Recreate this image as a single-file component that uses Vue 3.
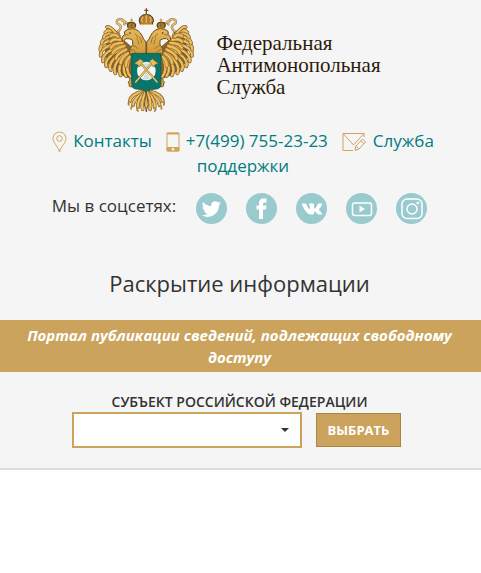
<script setup>
import { ref } from 'vue'

const region = ref('')

const wingFeathers = [
  'M118 176 Q104 214 122 230',
  'M114 172 Q92 206 108 228',
  'M110 166 Q78 200 92 226',
  'M106 160 Q64 194 76 220',
  'M102 153 Q50 186 62 210',
  'M98 145 Q40 174 49 199',
  'M95 136 Q34 158 39 184',
  'M92 127 Q28 140 32 167',
  'M89 118 Q30 122 31 149',
  'M87 109 Q38 106 35 130',
  'M85 102 Q50 92 41 112',
  'M80 100 Q56 84 46 97',
  'M78 100 Q58 76 51 81'
]
const wingCoverts = [
  'M120 170 Q106 184 108 198',
  'M114 160 Q92 174 92 190',
  'M108 149 Q80 160 78 176',
  'M103 138 Q72 146 68 160',
  'M97 128 Q68 130 63 143',
  'M91 119 Q70 114 62 125',
  'M84 110 Q72 100 62 108'
]
const tailFeathers = [
  'M160 274 Q122 282 119 304',
  'M162 276 Q130 296 129 316',
  'M164 276 Q140 304 144 322',
  'M167 276 Q152 306 158 328'
]
</script>

<template>
  <div class="page">
    <header class="top">
      <a href="#" class="brand">
        <svg class="emblem" viewBox="0 0 330 360" aria-hidden="true">
          <defs>
            <linearGradient id="gold" x1="0" y1="0" x2="0" y2="1">
              <stop offset="0" stop-color="#e6b85a" />
              <stop offset="1" stop-color="#cf9838" />
            </linearGradient>
            <g id="half" stroke-linecap="round" stroke-linejoin="round">
              <path d="M80 104 Q104 120 120 136 L145 170 L120 236 Q80 224 52 190 Q34 150 60 104Z" fill="#8a642a" />
              <template v-for="d in wingFeathers" :key="d">
                <path :d="d" fill="none" stroke="#694b22" stroke-width="11" />
                <path :d="d" fill="none" stroke="#e2b04f" stroke-width="8" />
                <path :d="d" fill="none" stroke="#f3d382" stroke-width="2" />
              </template>
              <template v-for="d in wingCoverts" :key="d">
                <path :d="d" fill="none" stroke="#86602a" stroke-width="12" />
                <path :d="d" fill="none" stroke="#dfac49" stroke-width="9" />
                <path :d="d" fill="none" stroke="#f5d98e" stroke-width="2" />
              </template>
              <template v-for="d in tailFeathers" :key="d">
                <path :d="d" fill="none" stroke="#6f5025" stroke-width="11" />
                <path :d="d" fill="none" stroke="#dfae4e" stroke-width="8" />
                <path :d="d" fill="none" stroke="#f5d98e" stroke-width="2" />
              </template>
              <path d="M119 306 q-7 4 -2 9 M129 318 q-8 2 -5 9 M144 324 q-6 5 0 9" fill="none" stroke="#b68132" stroke-width="5" />
              <path d="M130 236 Q117 232 119 242 Q110 246 118 252 Q114 262 126 260 L140 266 L142 238Z" fill="#dba642" stroke="#76531f" stroke-width="3" />
              <path d="M118 71 Q107 70 101 62 Q94 54 82 60 Q78 68 84 72 Q94 75 92 84 Q90 91 84 94 M98 62 Q106 64 103 73" fill="none" stroke="#94733a" stroke-width="7" />
              <path d="M118 71 Q107 70 101 62 Q94 54 82 60 Q78 68 84 72 Q94 75 92 84 Q90 91 84 94 M98 62 Q106 64 103 73" fill="none" stroke="#e3c078" stroke-width="4" />
              <path d="M104 94 Q112 85 128 86 Q148 89 156 107 Q160 118 168 126 L168 170 L124 170 Q116 158 120 146 Q132 134 128 121 Q120 114 108 116 L99 125 Q91 112 103 104Z" fill="url(#gold)" stroke="#694b22" stroke-width="3" />
              <path d="M104 105 L115 104 M135 101 q7 4 8 12 M141 117 q6 6 5 15 M130 137 q9 1 13 9 M148 111 q7 8 7 18 M125 148 q8 1 13 10" fill="none" stroke="#7f5922" stroke-width="2" />
              <circle cx="120" cy="99" r="2.500" fill="#3b2a15" />
              <path d="M114 83 Q109 74 115 69 Q124 63 134 69 Q140 74 135 83Z" fill="#94691f" stroke="#4c3517" stroke-width="3" />
              <path d="M114 84 L136 84 M120 72 Q116 77 120 80 M130 72 Q134 77 130 80 M125 57 v9 M122 60 h6" fill="none" stroke="#c4913c" stroke-width="3" />
            </g>
            <g id="hammer" stroke-linecap="round" stroke-linejoin="round">
              <path d="M137 246 L186 190" stroke="#765b20" stroke-width="6" />
              <path d="M137 246 L186 190" stroke="#f1cb65" stroke-width="4" />
              <path d="M178 183 L188 177 L195 183 L205 190 L195 194 L190 201 L184 192Z" fill="#e7bd59" stroke="#80601e" stroke-width="2" />
            </g>
          </defs>
          <use href="#half" />
          <use href="#half" transform="translate(338 0) scale(-1 1)" />
          <path d="M169 274 L163 315 Q169 327 169 336 Q169 327 175 315Z" fill="#e3b557" stroke="#6f5025" stroke-width="3" />
          <path d="M151 73 Q144 59 151 51 Q158 42 169 44 Q180 42 187 51 Q194 59 187 73Z" fill="#b17c2c" stroke="#513817" stroke-width="3" />
          <path d="M158 67 Q151 56 160 51 M180 67 Q187 56 178 51 M169 46 V69 M152 73 H186" fill="none" stroke="#e3b85e" stroke-width="4" />
          <path d="M169 25 V42 M163 31 H175" stroke="#765322" stroke-width="4" />
          <path d="M125 160 H213 V252 Q213 265 200 267 L181 269 Q173 270 169 276 Q165 270 157 269 L138 267 Q125 265 125 252Z" fill="#08766c" stroke="#174d40" stroke-width="2" />
          <circle cx="169" cy="213" r="28" fill="#f4f5f3" />
          <path d="M169 213 L158 193 Q169 187 180 193Z M169 213 L158 236 Q169 241 180 236Z" fill="#d5dddb" />
          <use href="#hammer" />
          <use href="#hammer" transform="translate(338 0) scale(-1 1)" />
        </svg>
        <span class="brand-name">Федеральная<br />Антимонопольная<br />Служба</span>
      </a>

      <nav class="contacts">
        <a href="#"><svg class="pin" viewBox="0 0 15 22" aria-hidden="true"><path d="M7.500 21 C6 15 1 12 1 7.500 A6.500 6.500 0 0 1 14 7.500 C14 12 9 15 7.500 21Z" /><circle cx="7.500" cy="7.500" r="2.800" /></svg>Контакты</a>
        <a href="tel:+74997552323"><svg class="phone" viewBox="0 0 14 20" aria-hidden="true"><rect x="1" y="1" width="12" height="18" rx="1.500" /><path class="solid" d="M1 15.500 H13 V19 H1Z M1 1 H13 V2 H1Z" /><circle class="key" cx="7" cy="17.300" r="1.300" /></svg>+7(499) 755-23-23</a>
        <a href="#"><svg class="mail" viewBox="0 0 25 20" aria-hidden="true"><path d="M11 18.500 H1 V1.500 H22 V5 M1 1.500 L11.500 13 L22 1.500 M14 14 L20.500 7 L23.500 10 L17 17 L13 18.500Z M14 14 L17 17 M19 9 L22 12" /></svg><span>Служба</span> <span>поддержки</span></a>
      </nav>

      <div class="social">
        <span class="social-label">Мы в соцсетях:</span>
        <div class="social-links">
          <a href="#" aria-label="Twitter">
            <svg viewBox="0 0 31 31"><path d="M25 10.200 a8 8 0 0 1-2.200.6 a4 4 0 0 0 1.700-2.200 a8 8 0 0 1-2.500 1 a3.900 3.900 0 0 0-6.700 3.600 A11 11 0 0 1 7.200 9 a3.900 3.900 0 0 0 1.200 5.300 a4 4 0 0 1-1.800-.5 a3.900 3.900 0 0 0 3.200 3.900 a4 4 0 0 1-1.800.1 a3.900 3.900 0 0 0 3.700 2.700 a8 8 0 0 1-5.700 1.700 a11.200 11.200 0 0 0 17-9.900 a8 8 0 0 0 2-2.100Z" /></svg>
          </a>
          <a href="#" aria-label="Facebook">
            <svg viewBox="0 0 31 31"><path d="M13 26 V16.500 H10.500 V12.500 H13 V10 Q13 5.500 17.500 5.500 H20.500 V9.500 H18.500 Q17 9.500 17 11 V12.500 H20.500 L20 16.500 H17 V26Z" /></svg>
          </a>
          <a href="#" aria-label="ВКонтакте">
            <svg viewBox="0 0 31 31"><path d="M15 21.500 Q10 21.500 6 11.500 Q5.700 10.600 6.700 10.600 H9.500 Q10.200 10.600 10.500 11.500 Q12 15.500 13.300 16 Q14 16 14 14.200 Q14 12 12.600 11.500 Q13.200 10.200 15.500 10.200 Q18 10.200 18 11.500 V15 Q18.300 16.300 19.500 15 Q20.800 13.500 21.700 11.300 Q22 10.600 22.700 10.600 H25.500 Q26.500 10.600 26 11.700 Q25.200 13.600 23.200 16 Q22.600 16.700 23.200 17.300 Q25.300 19.300 26 20.600 Q26.300 21.500 25.300 21.500 H22.500 Q21.800 21.500 21.200 20.700 Q19.700 18.700 18.600 18.600 Q18 18.600 18 20 Q18 21.500 17 21.500Z" /></svg>
          </a>
          <a href="#" aria-label="YouTube">
            <svg viewBox="0 0 31 31"><rect class="line" x="6.500" y="10" width="19" height="12.500" rx="2" /><path d="M13.500 12.500 L19 16 L13.500 19.500Z" /></svg>
          </a>
          <a href="#" aria-label="Instagram">
            <svg viewBox="0 0 31 31"><rect class="line" x="6" y="6" width="20" height="19.500" rx="5" /><circle class="line" cx="16" cy="16" r="5" /><circle cx="21.800" cy="10" r="1.300" /></svg>
          </a>
        </div>
      </div>

      <h1>Раскрытие информации</h1>
      <p class="banner">Портал публикации сведений, подлежащих свободному доступу</p>

      <form class="picker" @submit.prevent>
        <label for="region">СУБЪЕКТ РОССИЙСКОЙ ФЕДЕРАЦИИ</label>
        <div class="picker-row">
          <div class="select-wrap">
            <select id="region" v-model="region"><option value=""></option></select>
            <span class="caret"></span>
          </div>
          <button type="submit">ВЫБРАТЬ</button>
        </div>
      </form>
    </header>
  </div>
</template>

<style>
body {
  margin: 0;
  background: #fff;
}
</style>

<style scoped>
.page {
  font-family: "Trebuchet MS", "Open Sans", "Noto Sans", sans-serif;
  color: #333;
}
.top {
  background: #f5f5f5;
  border-bottom: 2px solid #ddd;
  padding-bottom: 20px;
}
a {
  color: #007b80;
  text-decoration: none;
}
.brand {
  display: flex;
  justify-content: center;
  gap: 16px;
  padding-right: 10px;
  color: #2b1b0c;
}
.emblem {
  width: 110px;
  height: 120px;
  flex: none;
}
.brand-name {
  padding-top: 32px;
  font: 21px/22px "Liberation Serif", serif;
}
.contacts {
  padding: 8px 15px 0 20px;
  font-size: 17px;
  line-height: 25px;
  text-align: center;
}
.contacts a + a {
  margin-left: 10px;
}
.contacts a:first-child,
.contacts a:nth-child(2) {
  margin-right: 4px;
}
.contacts svg {
  margin-right: 6px;
  vertical-align: middle;
  fill: none;
  stroke: #d0a55b;
}
.contacts .solid {
  fill: #d0a55b;
}
.contacts .key {
  fill: #f5f5f5;
  stroke: none;
}
.pin {
  width: 15px;
  height: 22px;
}
.phone {
  width: 14px;
  height: 20px;
}
.mail {
  width: 25px;
  height: 20px;
}
.social {
  display: flex;
  justify-content: center;
  gap: 20px;
  padding: 15px 2px 0 0;
}
.social-label {
  font-size: 17px;
  line-height: 26px;
}
.social-links {
  display: flex;
  gap: 19px;
}
.social-links a {
  width: 31px;
  height: 31px;
  border-radius: 50%;
  background: #99cacd;
}
.social-links svg {
  display: block;
  fill: #fff;
}
.social-links .line {
  fill: none;
  stroke: #fff;
  stroke-width: 1.5px;
}
h1 {
  margin: 42px 2px 20px 0;
  font-size: 22px;
  line-height: 34px;
  font-weight: 400;
  text-align: center;
}
.banner {
  margin: 0;
  padding: 4px 17px 4px 15px;
  background: #cba35c;
  color: #fff;
  font-size: 15px;
  line-height: 22px;
  font-weight: 700;
  font-style: italic;
  text-align: center;
}
.picker {
  display: flex;
  flex-direction: column;
  align-items: center;
  padding: 20px 8px 0 0;
}
.picker label {
  font-size: 14px;
  line-height: 20px;
  font-weight: 600;
  padding-left: 6px;
}
.picker-row {
  display: flex;
  align-items: center;
  gap: 14px;
}
.select-wrap {
  position: relative;
}
select {
  display: block;
  width: 230px;
  height: 36px;
  border: 2px solid #cba35c;
  border-radius: 0;
  background: #fff;
  appearance: none;
}
.caret {
  position: absolute;
  right: 13px;
  top: 16px;
  border: 4px solid transparent;
  border-top-color: #333;
  border-bottom: 0;
  pointer-events: none;
}
button {
  height: 34px;
  padding: 0 11px;
  border: 1px solid #a98443;
  background: #cba35c;
  color: #fff;
  font: 700 13px "Open Sans", sans-serif;
}
</style>
